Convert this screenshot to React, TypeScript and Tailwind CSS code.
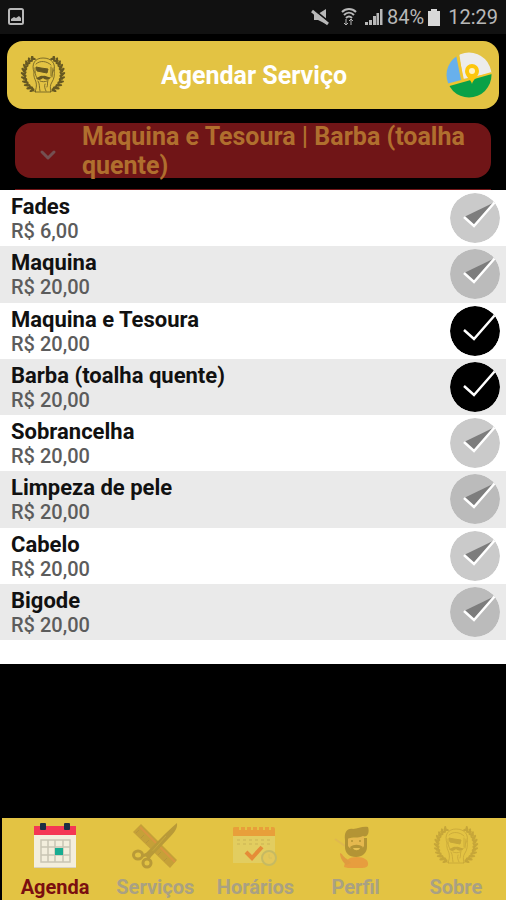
import { useState } from "react";
import { ChevronDown } from "lucide-react";

const services = [
  { name: "Fades", price: "R$ 6,00" },
  { name: "Maquina", price: "R$ 20,00" },
  { name: "Maquina e Tesoura", price: "R$ 20,00" },
  { name: "Barba (toalha quente)", price: "R$ 20,00" },
  { name: "Sobrancelha", price: "R$ 20,00" },
  { name: "Limpeza de pele", price: "R$ 20,00" },
  { name: "Cabelo", price: "R$ 20,00" },
  { name: "Bigode", price: "R$ 20,00" },
];

// Leaf angles along one branch of the laurel wreath
const leaves = [-54, -42, -30, -18, -6, 6, 18, 30, 42, 54, 66];

function Branch() {
  return (
    <g>
      <path d="M10 2C1 10 1 27 16 36" fill="none" stroke="currentColor" strokeWidth="0.7" />
      {leaves.map((a) => {
        const x = 21 - 17 * Math.cos((a * Math.PI) / 180);
        const y = 18 + 18 * Math.sin((a * Math.PI) / 180);
        return (
          <g key={a} transform={`translate(${x} ${y}) rotate(${-a})`}>
            <ellipse cx="-1.8" cy="-1" rx="2.8" ry="1.2" transform="rotate(40)" fill="currentColor" />
            <ellipse cx="2" cy="-1" rx="2.8" ry="1.2" transform="rotate(-45)" fill="currentColor" />
          </g>
        );
      })}
    </g>
  );
}

function BarberLogo({ className }: { className?: string }) {
  return (
    <svg viewBox="0 0 46 38" className={className} aria-hidden="true">
      <Branch />
      <g transform="translate(46 0) scale(-1 1)">
        <Branch />
      </g>
      <g fill="none" stroke="currentColor" strokeWidth="0.8" strokeLinecap="round">
        <path d="M14 16C11 8 15 2 23 2C32 2 36 8 34 15" />
        <path d="M14 16C13 20 15 23 16 26C17 30 16 33 15 36H31C30 32 30 29 32 26C34 23 35 19 34 14" />
        <path d="M16 8C20 4 27 5 31 9M15 12C15 16 15 19 17 22M31 11V20M33 12L32 21" />
        <path d="M18 25C20 28 19 31 20 35M25 28C24 30 25 33 26 35M28 24C27 27 28 29 27 31" />
        <path d="M20 25C22 26 25 26 27 25" />
      </g>
      <path d="M16 11L21 12L28 13L27 17L22 16L17 15Z" fill="currentColor" stroke="currentColor" />
      <path d="M16 22C19 22 20 19 23 20C26 19 28 22 31 21C29 25 25 24 23 22C21 24 18 25 16 22Z" fill="currentColor" />
    </svg>
  );
}

function MapIcon() {
  return (
    <svg viewBox="0 0 46 46" className="size-[46px]" aria-hidden="true">
      <clipPath id="map-circle">
        <circle cx="23" cy="23" r="22.5" />
      </clipPath>
      <g clipPath="url(#map-circle)">
        <path d="M0 0H46V46H0Z" fill="#e3c343" />
        <path d="M0 3H10L15 28L0 32Z" fill="#68b0ec" />
        <path d="M13 0H46V21L17 27Z" fill="#ececec" />
        <path d="M11 0L17 28M0 34L46 21" stroke="#f2c52c" strokeWidth="2" />
        <path d="M0 35L46 22V46H0Z" fill="#0aa147" />
      </g>
      <path d="M26 32C25 27 19 25 19 19A7 7 0 0 1 33 19C33 25 27 27 26 32Z" fill="#fdc70c" />
      <circle cx="26" cy="19" r="3" fill="#fff3c4" />
    </svg>
  );
}

function AgendaIcon() {
  return (
    <svg viewBox="0 0 46 48" className="h-12 w-[46px]" aria-hidden="true">
      <path d="M2 11H44V46H2Z" fill="#f3eedd" />
      <path d="M2 45H44V46H2Z" fill="#d9d3c3" />
      <path d="M2 4H44V13H2Z" fill="#f43654" />
      <rect x="8" y="1" width="6" height="7" rx="1" fill="#1c2e44" />
      <rect x="32" y="1" width="6" height="7" rx="1" fill="#1c2e44" />
      <path
        d="M9 18H38V40H9ZM9 25H38M9 33H38M16 18V40M23 18V40M31 18V40"
        fill="none"
        stroke="#c9c5b4"
        strokeWidth="1.5"
      />
      <rect x="23" y="26" width="8" height="7" fill="#18ac91" />
    </svg>
  );
}

function ScissorsIcon() {
  return (
    <svg viewBox="0 0 46 48" className="h-12 w-[46px]" aria-hidden="true">
      <path d="M1 10L9 2L45 38L38 46Z" fill="#c5a038" />
      <path d="M8 5L43 40" stroke="#d99640" strokeWidth="2" />
      <path d="M4 11L7 8M9 16L12 13M14 21L17 18M20 27L23 24M26 33L29 30M32 39L35 36" stroke="#b8963a" />
      <path d="M45 1C46 7 41 12 37 16L17 37L12 33L30 15C35 10 40 5 45 1Z" fill="#b99a38" />
      <path d="M17 33L34 14" stroke="#c9a93c" />
      <g fill="none" stroke="#b99a38" strokeWidth="3">
        <ellipse cx="6" cy="33" rx="4.5" ry="4" />
        <circle cx="15" cy="41" r="4" />
        <path d="M10 34L19 31L16 37" />
      </g>
    </svg>
  );
}

function HoursIcon() {
  return (
    <svg viewBox="0 0 46 48" className="h-12 w-[46px]" aria-hidden="true">
      <path d="M1 12H43V41H1Z" fill="#e2cd60" />
      <path d="M1 6Q1 5 3 5H41Q43 5 43 7V14H1Z" fill="#e89f3a" />
      <path d="M8 3V8M14 3V8M20 3V8M26 3V8M32 3V8M38 3V8" stroke="#e3c343" strokeWidth="2" />
      <path d="M5 18H38M5 22H38" stroke="#d6c05a" strokeWidth="2" strokeDasharray="3 3" />
      <path d="M14 30L20 36L30 25" fill="none" stroke="#e58c38" strokeWidth="4" />
      <circle cx="37" cy="36" r="7" fill="#e3c75a" stroke="#c6ba62" strokeWidth="2" />
      <path d="M37 32V36H40" fill="none" stroke="#d6c05a" />
    </svg>
  );
}

function ProfileIcon() {
  return (
    <svg viewBox="0 0 46 48" className="h-12 w-[46px]" aria-hidden="true">
      <path d="M11 45C12 38 16 35 24 35C31 35 36 38 35 43C34 46 30 46 27 46H15Z" fill="#e79d3e" />
      <path d="M7 31C10 32 10 35 14 37L18 41L13 43C10 40 7 36 7 31Z" fill="#e09b3f" />
      <path d="M2 17L12 24" stroke="#dfb84e" strokeWidth="2" />
      <path d="M12 16H34V25C34 31 29 35 23 35C16 35 12 31 12 25Z" fill="#b39435" />
      <path d="M15 15C20 17 26 14 31 14V24C29 29 18 29 15 24Z" fill="#e5b84e" />
      <path d="M12 18C11 10 14 6 20 7C25 7 29 4 35 5C37 11 34 16 30 14C25 17 20 14 14 17Z" fill="#b39435" />
      <circle cx="19" cy="19" r="1" fill="#b39435" />
      <circle cx="27" cy="19" r="1" fill="#b39435" />
      <path d="M17 25C21 22 26 22 30 25L28 29H19Z" fill="#b39435" />
      <path d="M20 26H27C26 29 21 29 20 26Z" fill="#e6c052" />
    </svg>
  );
}

const tabs = [
  { label: "Agenda", icon: <AgendaIcon /> },
  { label: "Serviços", icon: <ScissorsIcon /> },
  { label: "Horários", icon: <HoursIcon /> },
  { label: "Perfil", icon: <ProfileIcon /> },
  { label: "Sobre", icon: <BarberLogo className="h-12 w-[46px] py-1 text-[#c6a639]" /> },
];

function StatusBar() {
  return (
    <div className="flex h-[34px] items-center justify-between bg-[#111111] px-2 text-[#b8b8b8]">
      <svg viewBox="0 0 16 18" className="h-[18px] w-4" aria-hidden="true">
        <rect x="1" y="1" width="14" height="15" rx="1.5" fill="none" stroke="currentColor" strokeWidth="2" />
        <path d="M3 13V11L6 9L8 10L11 8L13 10V13Z" fill="currentColor" />
      </svg>
      <div className="flex items-center gap-1">
        <svg viewBox="0 0 18 18" className="size-[18px]" fill="currentColor" aria-hidden="true">
          <path d="M3 6H7L15 1V16L7 12H3Z" />
          <path d="M2 1L18 14" stroke="#111111" strokeWidth="2" />
          <path d="M1 3L17 16" stroke="currentColor" strokeWidth="3" />
        </svg>
        <svg viewBox="0 0 24 18" className="ml-1 h-[18px] w-6" fill="none" stroke="currentColor" aria-hidden="true">
          <path d="M5 4C9 0 15 0 19 4M7 7C10 4 14 4 17 7M9 10C11 8 13 8 15 10" strokeWidth="2" />
          <path d="M9 11V17M7 15L9 17L11 15M14 17V11M12 13L14 11L16 13" />
        </svg>
        <svg viewBox="0 0 18 18" className="size-[18px]" fill="currentColor" aria-hidden="true">
          <path d="M0 14H3V17H0ZM4 12H7V17H4ZM8 8H11V17H8ZM11.500 5H14V17H11.500ZM15 1H17.500V17H15Z" />
        </svg>
        <span className="text-xl leading-6">84%</span>
        <svg viewBox="0 0 12 18" className="h-[18px] w-3" aria-hidden="true">
          <path d="M0 3H3V1H9V3H12V18H0Z" fill="#d8d8d8" />
        </svg>
        <span className="ml-1 text-xl leading-6">12:29</span>
      </div>
    </div>
  );
}

function CheckMark({ checked, shaded }: { checked: boolean; shaded: boolean }) {
  return (
    <svg viewBox="0 0 50 50" className="size-[50px] shrink-0 rounded-full peer-focus-visible:ring-2" aria-hidden="true">
      <circle cx="25" cy="25" r="25" fill={checked ? "#000000" : shaded ? "#bbbbbb" : "#cacaca"} />
      <path
        d="M14 24L24 33L45 9"
        fill={checked ? "none" : "#7d7d7d"}
        stroke="#ffffff"
        strokeWidth="2.5"
      />
    </svg>
  );
}

export default function App() {
  const [selected, setSelected] = useState(["Maquina e Tesoura", "Barba (toalha quente)"]);
  const [activeTab, setActiveTab] = useState("Agenda");

  const toggle = (name: string) => {
    setSelected((prev) => (prev.includes(name) ? prev.filter((n) => n !== name) : [...prev, name]));
  };

  return (
    <div className="flex min-h-screen flex-col bg-black font-[Roboto,sans-serif]">
      <StatusBar />

      {/* Header */}
      <header className="mx-[7px] mt-[7px] flex h-[68px] items-center rounded-2xl bg-[#e3c343] pr-[7px] pl-[13px]">
        <BarberLogo className="h-[38px] w-[46px] text-[#665822]" />
        <h1 className="flex-1 pr-1 text-center text-[25px] leading-[29px] font-bold text-white">Agendar Serviço</h1>
        <button type="button" aria-label="Mapa">
          <MapIcon />
        </button>
      </header>

      {/* Selected services */}
      <button
        type="button"
        className="mx-[15px] mt-[14px] flex h-[55px] items-center rounded-2xl bg-[#701517] pr-4 pl-[21px] text-left text-[#b06f2e]"
      >
        <ChevronDown className="mt-2 size-6 shrink-0 text-[#745052]" strokeWidth={3} />
        <span className="ml-[22px] text-[25px] leading-[29px] font-bold">{selected.join(" | ")}</span>
      </button>

      {/* Service list */}
      <main className="mt-[11px]">
        <div className="mx-[15px] h-px bg-[#701517]" />
        <ul className="grid min-h-[450px] auto-rows-fr">
          {services.map((service, i) => (
            <li key={service.name} className="odd:bg-white even:bg-[#eaeaea]">
              <label className="flex h-full items-center justify-between pr-[6px] pl-[11px]">
                <input
                  type="checkbox"
                  className="peer sr-only"
                  checked={selected.includes(service.name)}
                  onChange={() => toggle(service.name)}
                />
                <span className="flex flex-col">
                  <span className="text-[22px] leading-[26px] font-bold text-[#111111]">{service.name}</span>
                  <span className="text-xl leading-[22px] font-medium text-[#5c5c5c]">{service.price}</span>
                </span>
                <CheckMark checked={selected.includes(service.name)} shaded={i % 2 === 1} />
              </label>
            </li>
          ))}
        </ul>
        <div className="h-6 bg-white" />
      </main>

      {/* Bottom tabs */}
      <nav className="mt-auto ml-[2px] grid grid-cols-5 bg-[#e3c343] pt-1 pl-[3px]">
        {tabs.map((tab) => (
          <button
            key={tab.label}
            type="button"
            onClick={() => setActiveTab(tab.label)}
            className="flex flex-col items-center gap-[5px] pb-px"
          >
            {tab.icon}
            <span
              className={
                tab.label === activeTab
                  ? "text-xl leading-6 font-bold text-[#7b0f10]"
                  : "text-xl leading-6 font-bold text-[#a9a183]"
              }
            >
              {tab.label}
            </span>
          </button>
        ))}
      </nav>
    </div>
  );
}
